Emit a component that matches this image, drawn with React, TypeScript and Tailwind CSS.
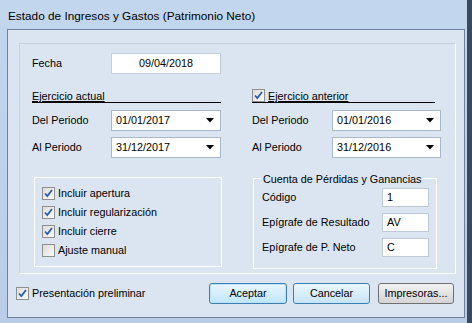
import React from "react"

const CheckBox = ({ checked }: { checked: boolean }) => (
  <span className="w-[13px] h-[13px] shrink-0 border border-[#8e8f8f] bg-gradient-to-br from-[#dcdcdc] to-[#fbfbfb] flex items-center justify-center">
    {checked && (
      <svg width="9" height="9" viewBox="0 0 9 9">
        <path d="M1 4.5 L3.3 7 L8 1" fill="none" stroke="#2a5ea6" strokeWidth="1.8" />
      </svg>
    )}
  </span>
)

const DateSelect = ({ value }: { value: string }) => (
  <div className="w-[110px] h-[21px] bg-white border border-[#a9b8cb] flex items-center justify-between pl-[4px] pr-[6px]">
    <span>{value}</span>
    <svg width="8" height="5" viewBox="0 0 8 5">
      <path d="M0 0 H8 L4 4.5 Z" fill="#000" />
    </svg>
  </div>
)

const CheckRow = ({ label, checked }: { label: string; checked: boolean }) => (
  <div className="flex items-center gap-[3px] h-[19px]">
    <CheckBox checked={checked} />
    <span>{label}</span>
  </div>
)

const TextField = ({ value }: { value: string }) => (
  <div className="w-[47px] h-[19px] bg-white border border-[#bfcad8] pl-[4px] leading-[16px]">{value}</div>
)

export default function App() {
  return (
    <div className="w-[472px] h-[323px] overflow-hidden bg-gradient-to-b from-[#c2d7ee] to-[#b9cde6] border-r-[5px] border-r-[#3a4a5e] text-[10.8px] text-black font-['Liberation_Sans',Arial,sans-serif]">
      <div className="h-[29px] pl-[8px] pt-[8px] text-[11.8px] leading-[16px]">
        Estado de Ingresos y Gastos (Patrimonio Neto)
      </div>
      <div className="ml-[7px] w-[458px] h-[289px] border border-[#6f829c] bg-[#dbe5f1] pl-[11px] pt-[13px]">
        <div className="w-[437px] h-[231px] border border-white border-l-[#c4d0de] border-t-[#c4d0de] pl-[12px] pt-[9px]">
          {/* Fecha */}
          <div className="flex items-center h-[21px]">
            <span className="w-[79px]">Fecha</span>
            <div className="w-[110px] h-[21px] bg-white border border-[#c4cfdc] text-center leading-[19px]">09/04/2018</div>
          </div>

          <div className="grid grid-cols-[189px_189px] gap-x-[31px] mt-[15px]">
            {/* Ejercicio actual */}
            <div>
              <div className="h-[14px] border-b border-black flex items-end">
                <span className="underline underline-offset-[1px] leading-[12px]">Ejercicio actual</span>
              </div>
              <div className="flex items-center mt-[7px]">
                <span className="w-[79px]">Del Periodo</span>
                <DateSelect value="01/01/2017" />
              </div>
              <div className="flex items-center mt-[6px]">
                <span className="w-[79px]">Al Periodo</span>
                <DateSelect value="31/12/2017" />
              </div>
              <div className="ml-[2px] mt-[19px] w-[188px] h-[90px] border border-white pl-[7px] pt-[6px]">
                <CheckRow label="Incluir apertura" checked />
                <CheckRow label="Incluir regularización" checked />
                <CheckRow label="Incluir cierre" checked />
                <CheckRow label="Ajuste manual" checked={false} />
              </div>
            </div>

            {/* Ejercicio anterior */}
            <div>
              <div className="h-[14px] border-b border-black flex items-end gap-[3px] w-[183px]">
                <CheckBox checked />
                <span className="underline underline-offset-[1px] leading-[12px]">Ejercicio anterior</span>
              </div>
              <div className="flex items-center mt-[7px]">
                <span className="w-[81px]">Del Periodo</span>
                <DateSelect value="01/01/2016" />
              </div>
              <div className="flex items-center mt-[6px]">
                <span className="w-[81px]">Al Periodo</span>
                <DateSelect value="31/12/2016" />
              </div>
              <div className="relative ml-[1px] mt-[20px] w-[184px] h-[91px] border border-white pl-[8px] pt-[9px]">
                <span className="absolute -top-[8px] left-[7px] px-[2px] bg-[#dbe5f1]">Cuenta de Pérdidas y Ganancias</span>
                <div className="flex items-center justify-between pr-[7px]">
                  <span>Código</span>
                  <TextField value="1" />
                </div>
                <div className="flex items-center justify-between pr-[7px] mt-[6px]">
                  <span>Epígrafe de Resultado</span>
                  <TextField value="AV" />
                </div>
                <div className="flex items-center justify-between pr-[7px] mt-[6px]">
                  <span>Epígrafe de P. Neto</span>
                  <TextField value="C" />
                </div>
              </div>
            </div>
          </div>
        </div>

        {/* bottom bar */}
        <div className="flex items-center mt-[9px] -ml-[3px] w-[438px]">
          <div className="flex items-center gap-[3px]">
            <CheckBox checked />
            <span>Presentación preliminar</span>
          </div>
          <div className="ml-auto flex">
            <button className="w-[78px] h-[21px] rounded-[3px] border border-[#3c7fb1] bg-gradient-to-b from-[#eaf6fd] to-[#bee6fd] shadow-[inset_0_0_0_1px_#bde2f8]">Aceptar</button>
            <button className="ml-[6px] w-[77px] h-[21px] rounded-[3px] border border-[#3c7fb1] bg-gradient-to-b from-[#eaf6fd] to-[#c6e4f7]">Cancelar</button>
            <button className="ml-[8px] w-[76px] h-[21px] rounded-[3px] border border-[#707070] bg-gradient-to-b from-[#f2f2f2] to-[#d5d5d5]">Impresoras...</button>
          </div>
        </div>
      </div>
    </div>
  )
}
